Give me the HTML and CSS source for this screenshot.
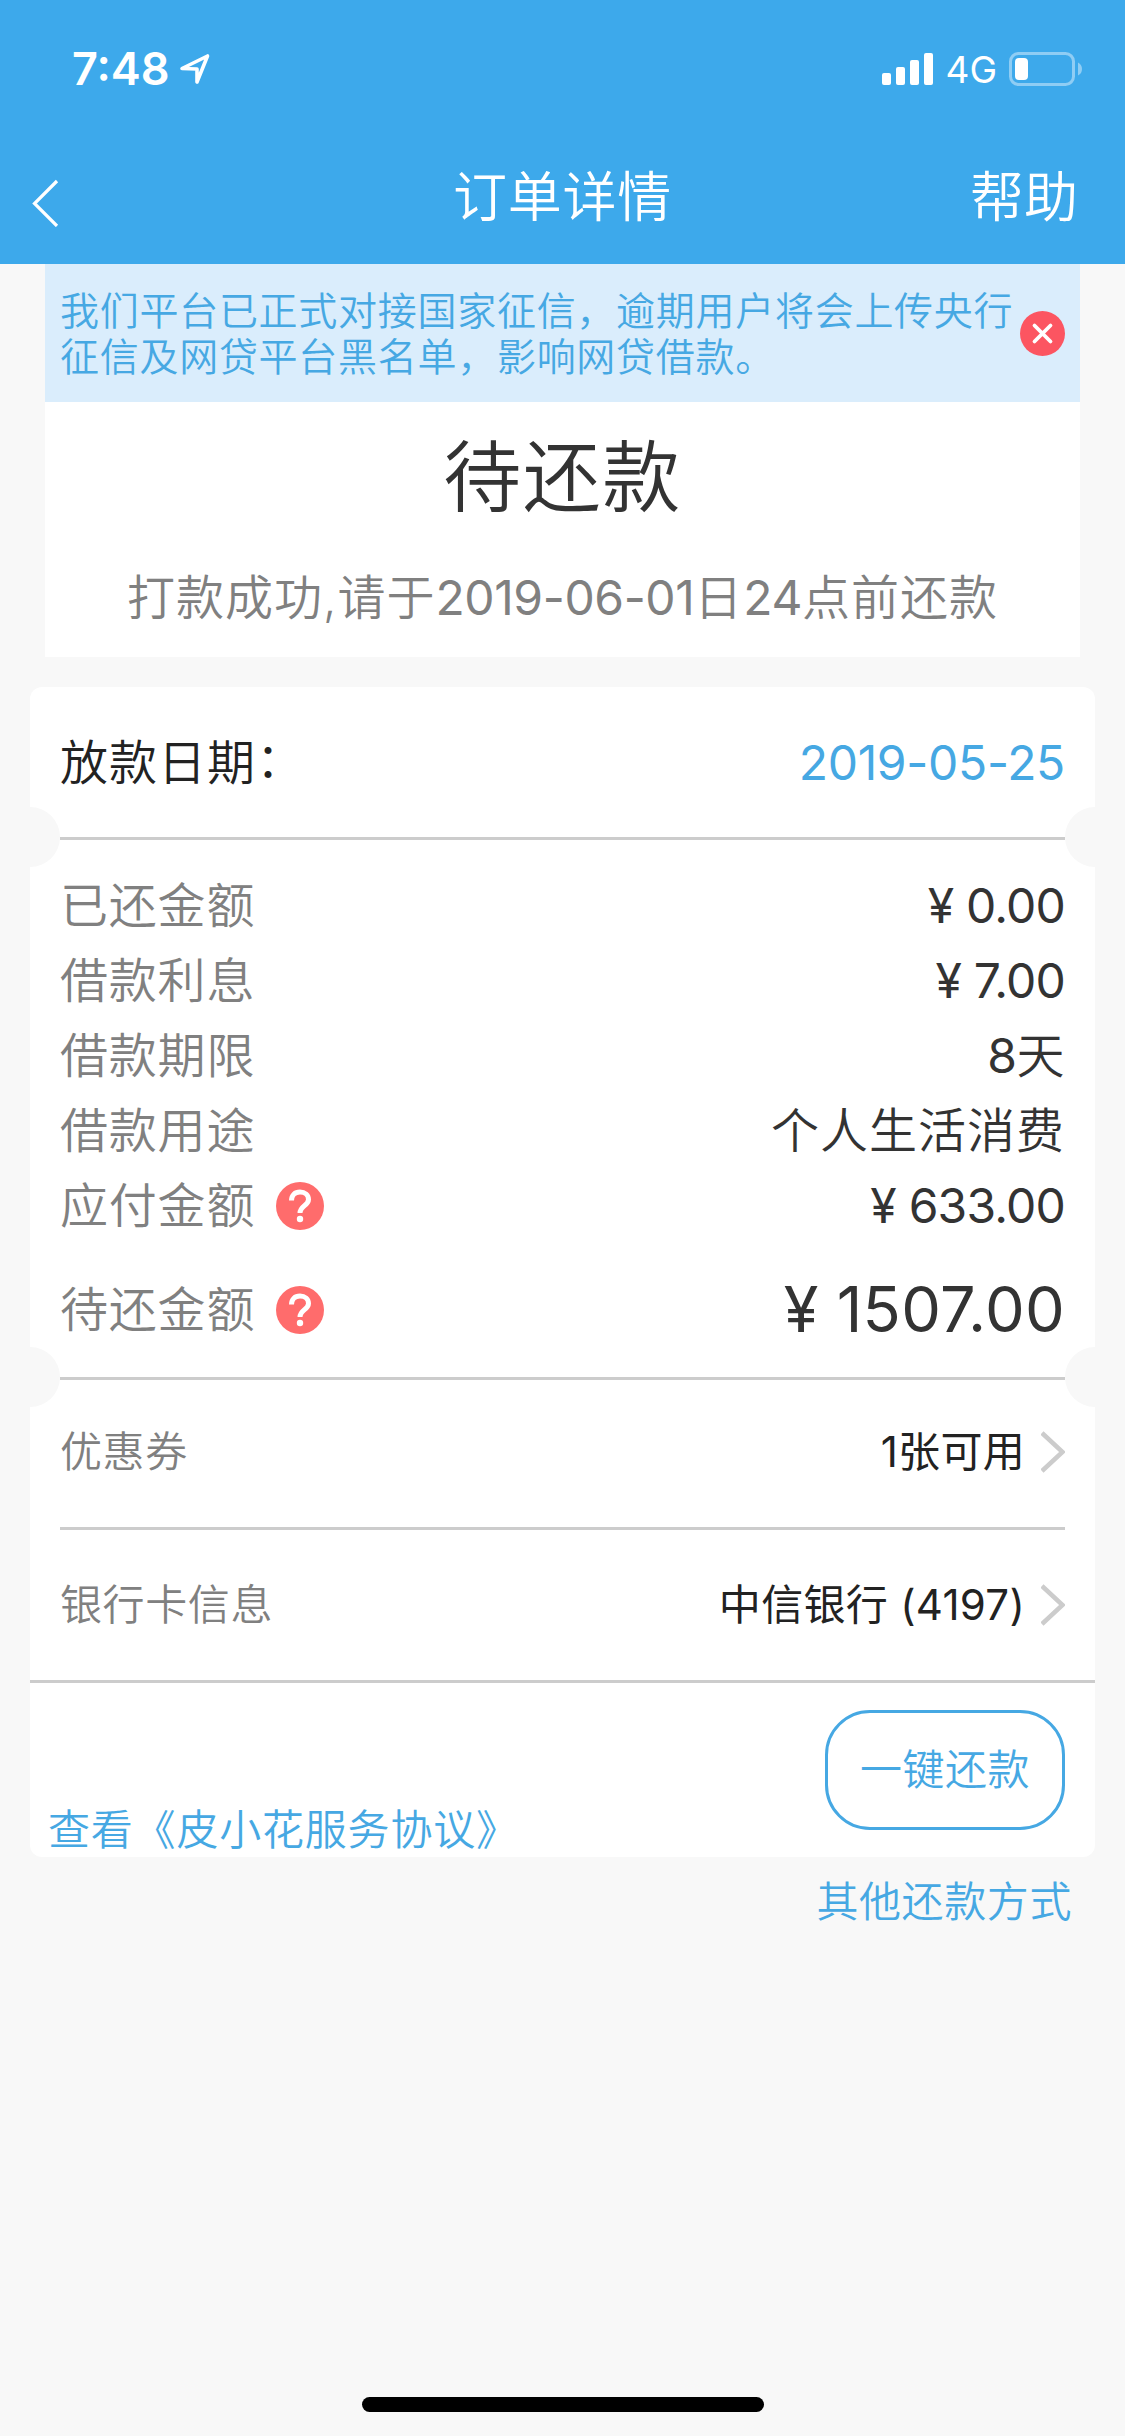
FILE: index.html
```html
<!DOCTYPE html>
<html lang="zh-CN">
<head>
<meta charset="utf-8">
<title>订单详情</title>
<link rel="stylesheet" href="styles.css">
</head>
<body>
<header class="header">
  <div class="status">
    <span class="clock">7:48</span>
    <svg class="location" width="32" height="32" viewBox="0 0 32 32"><path d="M3 15.5 28.500 3 18 29V16z" fill="none" stroke="#fff" stroke-width="3.600" stroke-linejoin="round"/></svg>
    <svg class="signal" width="52" height="34" viewBox="0 0 52 34" fill="#fff"><rect x="0" y="21" width="9" height="12" rx="2"/><rect x="14" y="15" width="9" height="18" rx="2"/><rect x="28" y="8" width="9" height="25" rx="2"/><rect x="42" y="1" width="9" height="32" rx="2"/></svg>
    <span class="network">4G</span>
    <svg class="battery" width="74" height="36" viewBox="0 0 74 36"><rect x="1.500" y="2.500" width="63" height="31" rx="8" fill="none" stroke="#8fcdf4" stroke-width="3"/><rect x="6" y="7" width="13" height="22" rx="4" fill="#fff"/><path d="M69 11.500q4 2 4 6.500t-4 6.500z" fill="#8fcdf4"/></svg>
  </div>
  <nav class="nav">
    <svg class="back" width="27" height="48" viewBox="0 0 27 48"><path d="M25 2 2.500 24.500 25 47" fill="none" stroke="#fff" stroke-width="3.200"/></svg>
    <h1 class="nav-title">订单详情</h1>
    <span class="help">帮助</span>
  </nav>
</header>
<main>
  <section class="summary">
    <div class="notice">
      <p class="notice-text">我们平台已正式对接国家征信，逾期用户将会上传央行<br>征信及网贷平台黑名单，影响网贷借款。</p>
      <svg class="close" width="45" height="45" viewBox="0 0 45 45"><circle cx="22.500" cy="22.500" r="22.500" fill="#fc5561"/><path d="M14.500 14.500 30.500 30.500M30.500 14.500 14.500 30.500" stroke="#fff" stroke-width="3.800" stroke-linecap="round"/></svg>
    </div>
    <h2 class="state">待还款</h2>
    <p class="state-note">打款成功,请于<span class="num">2019-06-01</span>日<span class="num">24</span>点前还款</p>
  </section>
  <section class="card">
    <div class="row date-row"><span class="date-label">放款日期<span class="colon">：</span></span><span class="date">2019-05-25</span></div>
    <div class="tear"></div>
    <div class="details">
      <div class="row"><span class="label">已还金额</span><span class="value">¥ 0.00</span></div>
      <div class="row"><span class="label">借款利息</span><span class="value">¥ 7.00</span></div>
      <div class="row"><span class="label">借款期限</span><span class="value term"><span class="num">8</span>天</span></div>
      <div class="row"><span class="label">借款用途</span><span class="value purpose">个人生活消费</span></div>
      <div class="row"><span class="label">应付金额</span><svg class="ask" width="48" height="48" viewBox="0 0 48 48"><circle cx="24" cy="24" r="24" fill="#ff6c6c"/><path d="M15.500 18.500C15.500 13 19 10 24 10s8.500 3 8.500 7.500c0 6-8.500 6.500-8.500 13.500" fill="none" stroke="#fff" stroke-width="5"/><circle cx="24" cy="37" r="3.200" fill="#fff"/></svg><span class="value">¥ 633.00</span></div>
      <div class="row total"><span class="label">待还金额</span><svg class="ask" width="48" height="48" viewBox="0 0 48 48"><circle cx="24" cy="24" r="24" fill="#ff6c6c"/><path d="M15.500 18.500C15.500 13 19 10 24 10s8.500 3 8.500 7.500c0 6-8.500 6.500-8.500 13.500" fill="none" stroke="#fff" stroke-width="5"/><circle cx="24" cy="37" r="3.200" fill="#fff"/></svg><span class="value amount">¥ 1507.00</span></div>
    </div>
    <div class="tear"></div>
    <div class="row link-row"><span class="link-label">优惠券</span><span class="link-value">1张可用</span><svg class="chevron" width="24" height="42" viewBox="0 0 24 42"><path d="M1 2 21.500 21 1 40" fill="none" stroke="#ccc" stroke-width="4.500"/></svg></div>
    <div class="rule"></div>
    <div class="row link-row"><span class="link-label">银行卡信息</span><span class="link-value">中信银行 (4197)</span><svg class="chevron" width="24" height="42" viewBox="0 0 24 42"><path d="M1 2 21.500 21 1 40" fill="none" stroke="#ccc" stroke-width="4.500"/></svg></div>
    <div class="rule full"></div>
    <div class="actions"><a class="terms">查看《皮小花服务协议》</a><button class="repay">一键还款</button></div>
  </section>
  <a class="other">其他还款方式</a>
</main>
<div class="home"></div>
</body>
</html>
```
FILE: styles.css
```css
* { box-sizing: border-box; }
body {
  margin: 0;
  width: 1125px;
  height: 2436px;
  display: flex;
  flex-direction: column;
  background: #f8f8f8;
  color: #333;
  font-family: Inter, "Noto Sans CJK SC", sans-serif;
  font-size: 48px;
  font-weight: 350;
  line-height: 1.2;
}
h1, h2, p { margin: 0; font-weight: inherit; }
svg { display: block; flex: none; }
.header { height: 264px; background: #3da9eb; color: #fff; }
.status { height: 132px; padding: 6px 42px 0 72px; display: flex; align-items: center; }
.clock { font-size: 45px; font-weight: 600; }
.location { margin-left: 9px; }
.signal { margin-left: auto; }
.network { margin: 2px 12px 0 11px; font-size: 37px; font-weight: 400; }
.nav { height: 132px; padding: 1px 47px 0 32px; display: grid; grid-template-columns: 215px 1fr 200px; align-items: center; font-size: 54px; }
.back { margin-top: 8px; }
.nav-title { font-size: 54px; text-align: center; letter-spacing: .7px; }
.help { text-align: right; }
.summary { width: 1035px; height: 393px; margin: 0 auto; background: #fff; text-align: center; }
.notice { height: 138px; padding: 1px 15px 0; display: flex; align-items: center; justify-content: space-between; background: #daedfc; text-align: left; }
.notice-text { flex: none; color: #46a8e3; font-size: 39px; line-height: 46px; letter-spacing: .72px; white-space: nowrap; }
.state { height: 152px; font-size: 78px; line-height: 152px; letter-spacing: 1.500px; }
.state-note { line-height: 87px; color: #808080; letter-spacing: 1px; }
.num { letter-spacing: -.4px; font-weight: 400; }
.card { width: 1065px; height: 1170px; margin: 30px auto 0; background: #fff; border-radius: 12px; overflow: hidden; }
.row { display: flex; align-items: center; padding: 0 30px; }
.date-row { height: 150px; padding-top: 1px; justify-content: space-between; }
.date-label { color: #222; letter-spacing: 1px; }
.colon { vertical-align: 3px; line-height: 1; }
.date { color: #46a8e3; font-weight: 400; letter-spacing: -.3px; }
.tear { height: 3px; margin: 0 30px; background: #ccc; position: relative; }
.tear::before, .tear::after { content: ""; position: absolute; top: -30px; width: 60px; height: 60px; border-radius: 50%; background: #f8f8f8; }
.tear::before { left: -60px; }
.tear::after { right: -60px; }
.details { height: 537px; padding-top: 28px; }
.details .row { height: 75px; }
.label { color: #808080; letter-spacing: .8px; }
.ask { margin-left: 21px; }
.value { margin-left: auto; font-weight: 400; letter-spacing: -.8px; }
.value.term { font-weight: 350; letter-spacing: .5px; }
.value.purpose { font-weight: 350; letter-spacing: 1px; }
.details .total { height: 134px; }
.value.amount { font-size: 63px; letter-spacing: .3px; }
.link-row { height: 147px; padding-bottom: 3px; font-size: 42px; }
.link-label { color: #808080; letter-spacing: .6px; }
.link-value { margin-left: auto; color: #222; font-weight: 400; letter-spacing: .3px; }
.chevron { margin-left: 16px; }
.rule { height: 3px; margin: 0 30px; background: #ccc; }
.rule + .link-row { height: 150px; padding-bottom: 0; }
.rule.full { margin: 0; }
.actions { height: 174px; padding: 27px 30px 0 18px; display: flex; justify-content: space-between; color: #46a8e3; font-size: 42px; }
.terms { align-self: flex-end; line-height: 54px; letter-spacing: .8px; }
.repay { width: 240px; height: 120px; padding: 0; border: 3px solid #46a8e3; border-radius: 45px; background: #fff; color: inherit; font: inherit; letter-spacing: .5px; }
.other { display: block; padding: 15px 53px 0 0; text-align: right; color: #46a8e3; font-size: 42px; line-height: 60px; letter-spacing: .6px; }
.home { width: 402px; height: 15px; margin: auto auto 24px; border-radius: 8px; background: #000; }
```
